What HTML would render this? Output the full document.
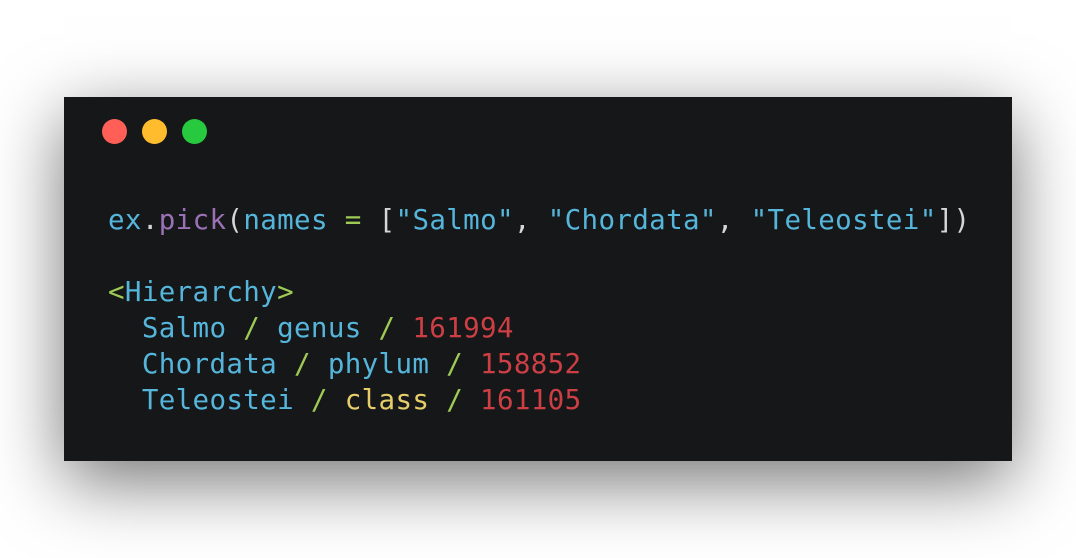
<!DOCTYPE html>
<html><head><style>
html,body{margin:0;padding:0;width:1076px;height:558px;background:#fff;overflow:hidden}
.win{position:absolute;left:64px;top:97px;width:948px;height:364px;background:#151718;box-shadow:0 20px 68px rgba(0,0,0,0.55)}
.dot{position:absolute;top:119px;width:25px;height:25px;border-radius:50%}
pre{position:absolute;left:108px;top:202px;margin:0;font-family:"DejaVu Sans Mono","Liberation Mono",monospace;font-size:27.5px;letter-spacing:0.35px;line-height:36px;color:#55b5db;white-space:pre}
.p{color:#9a71b5}.g{color:#9fca56}.w{color:#d4d7d6}.r{color:#cd3f45}.y{color:#e6cd69}
</style></head><body>
<div class="win"></div>
<div class="dot" style="left:102px;background:#ff5f56"></div>
<div class="dot" style="left:142px;background:#ffbd2e"></div>
<div class="dot" style="left:182px;background:#27c93f"></div>
<pre>ex<span class="w">.</span><span class="p">pick</span><span class="w">(</span>names <span class="g">=</span> <span class="w">[</span>"Salmo"<span class="w">,</span> "Chordata"<span class="w">,</span> "Teleostei"<span class="w">])</span>

<span class="g">&lt;</span>Hierarchy<span class="g">&gt;</span>
  Salmo <span class="g">/</span> genus <span class="g">/</span> <span class="r">161994</span>
  Chordata <span class="g">/</span> phylum <span class="g">/</span> <span class="r">158852</span>
  Teleostei <span class="g">/</span> <span class="y">class</span> <span class="g">/</span> <span class="r">161105</span></pre>
</body></html>
